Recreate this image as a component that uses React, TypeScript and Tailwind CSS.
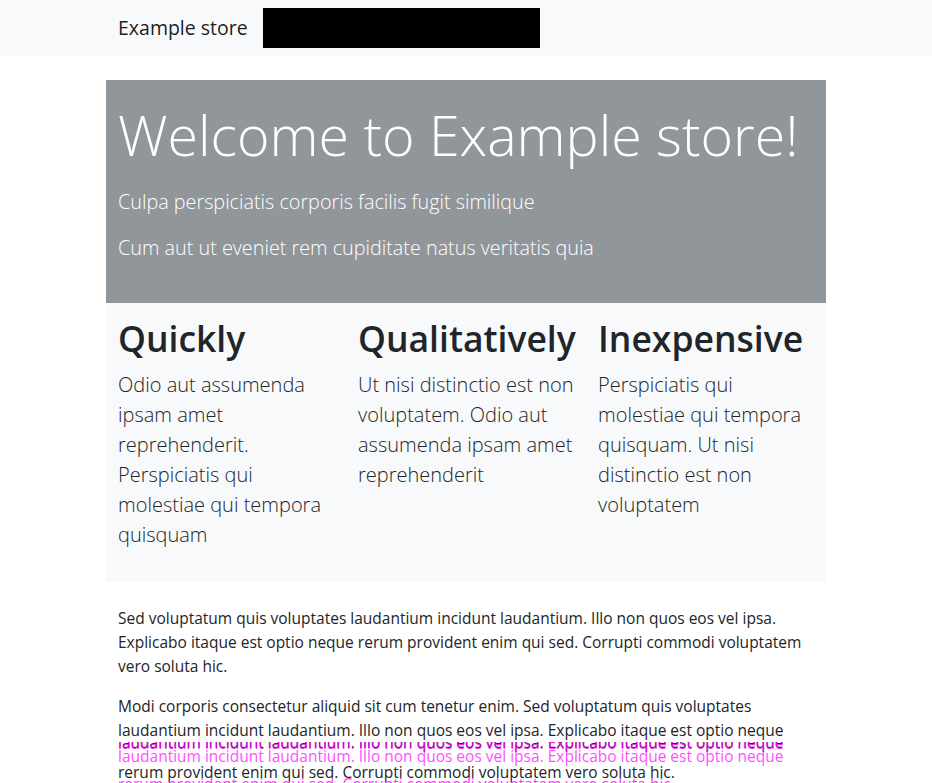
import React from "react";

const line2 =
  "laudantium incidunt laudantium. Illo non quos eos vel ipsa. Explicabo itaque est optio neque";
const line3 =
  "rerum provident enim qui sed. Corrupti commodi voluptatem vero soluta hic.";

function Lines({ lines }: { lines: string[] }) {
  return (
    <>
      {lines.map((l, i) => (
        <span key={i} className="block whitespace-nowrap">
          {l}
        </span>
      ))}
    </>
  );
}

export default function App() {
  const cols = [
    {
      title: "Quickly",
      lines: [
        "Odio aut assumenda",
        "ipsam amet",
        "reprehenderit.",
        "Perspiciatis qui",
        "molestiae qui tempora",
        "quisquam",
      ],
    },
    {
      title: "Qualitatively",
      lines: [
        "Ut nisi distinctio est non",
        "voluptatem. Odio aut",
        "assumenda ipsam amet",
        "reprehenderit",
      ],
    },
    {
      title: "Inexpensive",
      lines: [
        "Perspiciatis qui",
        "molestiae qui tempora",
        "quisquam. Ut nisi",
        "distinctio est non",
        "voluptatem",
      ],
    },
  ];

  return (
    <div className="min-h-screen bg-white font-['Open_Sans',sans-serif] text-[#212529] overflow-hidden">
      <nav className="h-14 bg-[#f8f9fa]">
        <div className="w-[720px] mx-auto px-3 h-full flex items-center">
          <span className="text-[19.5px] text-black/90 mr-[15px]">Example store</span>
          <div className="w-[277px] h-10 bg-black" />
        </div>
      </nav>

      <main className="w-[720px] mx-auto mt-6">
        <section className="bg-[#91969b] px-3 pt-6 pb-[40px] text-white">
          <h1 className="text-[55.5px] font-light leading-[62px] whitespace-nowrap">
            Welcome to Example store!
          </h1>
          <p className="text-[19.8px] font-light leading-[30px] mt-[21px]">
            Culpa perspiciatis corporis facilis fugit similique
          </p>
          <p className="text-[19.8px] font-light leading-[30px] mt-4">
            Cum aut ut eveniet rem cupiditate natus veritatis quia
          </p>
        </section>

        <section className="bg-[#f8f9fa] grid grid-cols-3 pt-[11px] pb-[32px]">
          {cols.map((c) => (
            <div key={c.title} className="px-3">
              <h2 className="text-[35.5px] font-semibold leading-[48px] whitespace-nowrap">
                {c.title}
              </h2>
              <p className="text-[20px] font-light leading-[30px] mt-2">
                <Lines lines={c.lines} />
              </p>
            </div>
          ))}
        </section>

        <section className="px-3 pt-6 text-[15.5px] leading-6">
          <p className="mb-4">
            <Lines
              lines={[
                "Sed voluptatum quis voluptates laudantium incidunt laudantium. Illo non quos eos vel ipsa.",
                "Explicabo itaque est optio neque rerum provident enim qui sed. Corrupti commodi voluptatem",
                "vero soluta hic.",
              ]}
            />
          </p>
          <p>
            <span className="block whitespace-nowrap">
              Modi corporis consectetur aliquid sit cum tenetur enim. Sed voluptatum quis voluptates
            </span>
            <span className="block whitespace-nowrap">{line2}</span>
            <span className="relative block h-[18px]">
              <span className="absolute left-0 top-0 h-[12px] w-full overflow-hidden">
                <span className="absolute left-0 top-[-12px] whitespace-nowrap text-[#212529]">
                  {line2}
                </span>
                <span className="absolute left-0 top-[-11px] whitespace-nowrap text-[#ff00ff]/80">
                  {line2}
                </span>
              </span>
              <span className="absolute left-0 top-[2px] whitespace-nowrap text-[#ff00ff] opacity-70">
                {line2}
              </span>
            </span>
            <span className="relative block whitespace-nowrap">
              {line3}
              <span className="absolute left-0 top-[12px] whitespace-nowrap text-[#ff00ff] opacity-80">
                {line3}
              </span>
            </span>
          </p>
        </section>
      </main>
    </div>
  );
}
